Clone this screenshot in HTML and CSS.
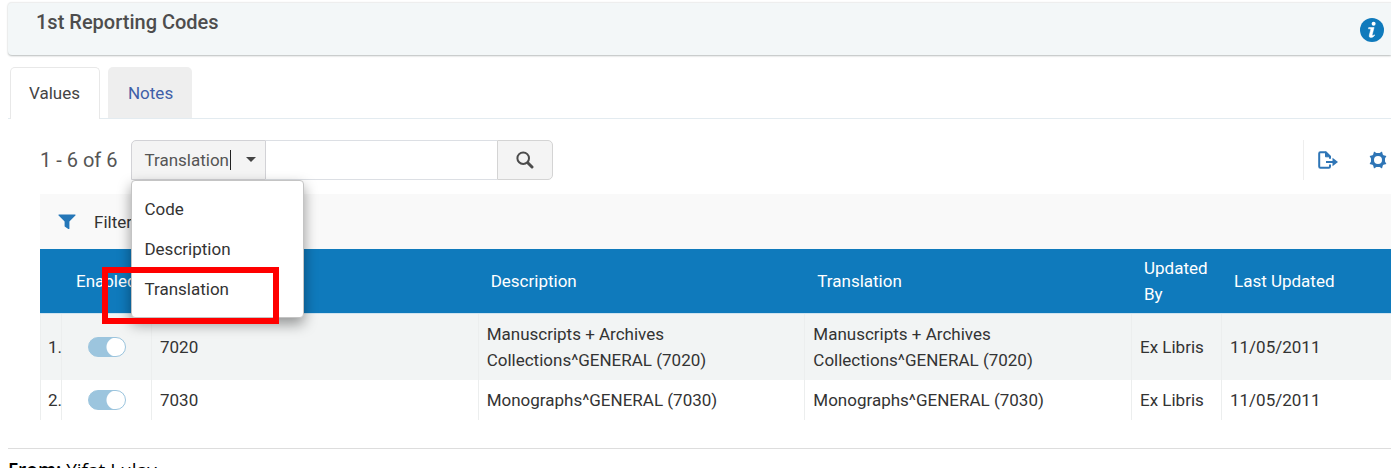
FILE: index.html
```html
<!DOCTYPE html>
<html lang="en">
<head>
<meta charset="utf-8"/>
<title>1st Reporting Codes</title>
<link rel="stylesheet" href="styles.css">
</head>

<body>
<header class="page-header">
  <h1 class="page-title">1st Reporting Codes</h1>
  <button class="icon-button info-button" aria-label="Information">
    <svg width="24" height="24" viewBox="0 0 24 24"><circle cx="12" cy="12" r="12" fill="#0f7abc"/><circle cx="13.6" cy="5.8" r="2" fill="#fff"/><path d="M8.7 9.5h5.4l-1.9 7.2q-.2.9.5.9.7 0 1.5-.9l.6.5q-1.7 2.4-3.8 2.4-2.3 0-1.7-2.5l1.4-5.3q.2-1-.6-1H8.4z" fill="#fff" stroke="#fff" stroke-width=".5"/></svg>
  </button>
</header>

<nav class="tabs">
  <a class="tab active" href="#values">Values</a>
  <a class="tab" href="#notes">Notes</a>
</nav>

<main class="content" id="values">
  <div class="toolbar">
    <span class="count">1 - 6 of 6</span>
    <form class="search">
      <div class="search-field">
        <select class="field-select" aria-label="Search field">
          <option>Code</option>
          <option>Description</option>
          <option selected>Translation</option>
        </select>
        <span class="text-cursor"></span>
        <span class="caret"></span>
        <ul class="menu">
          <li>Code</li>
          <li>Description</li>
          <li>Translation</li>
        </ul>
        <div class="highlight"></div>
      </div>
      <input class="search-input" type="text" aria-label="Search text">
      <button class="search-button" type="button" aria-label="Search">
        <svg width="18" height="18" viewBox="0 0 18 18" fill="none" stroke="#4c4c4c"><circle cx="7.2" cy="7.2" r="5.8" stroke-width="2"/><path d="M12 12l4 4" stroke-width="3" stroke-linecap="round"/></svg>
      </button>
    </form>
    <div class="tools">
      <button class="icon-button" aria-label="Export">
        <svg width="20" height="18" viewBox="0 0 20 18" fill="none" stroke="#2e75b6" stroke-width="2"><path d="M12 13.5v2.1q0 1.2-1.2 1.2H2.4q-1.2 0-1.2-1.2V2.4q0-1.2 1.2-1.2h5.4L12 5.3v2.5"/><path d="M7.5 1v4.8H12.4z" fill="#2e75b6" stroke-width="1"/><path d="M8 11h8"/><path d="M14.5 6.8l5.5 4.2-5.5 4.2z" fill="#2e75b6" stroke="none"/></svg>
      </button>
      <button class="icon-button" aria-label="Settings">
        <svg width="18" height="18" viewBox="0 0 18 18"><path fill="#2e75b6" fill-rule="evenodd" d="M5 .6L7.4 2h3.2L13 .6l.8 2.9.7.7 2.9.8L16 7.4v3.2l1.4 2.4-2.9.8-.7.7-.8 2.9-2.4-1.4H7.4L5 17.4l-.8-2.9-.7-.7L.6 13 2 10.6V7.4L.6 5l2.9-.8.7-.7zM9 5a4 4 0 1 0 0 8a4 4 0 1 0 0-8z"/></svg>
      </button>
    </div>
  </div>

  <div class="filters">
    <svg width="18" height="16" viewBox="0 0 18 16"><path d="M.8.5h16.4q.8.4.2 1.1L11.4 7.4v7q-.2 1-1.1.5L7 12.8q-.4-.3-.4-.8V7.4L.6 1.6Q0 .9.8.5z" fill="#2577b8"/></svg>
    <span>Filters</span>
  </div>

  <table class="codes">
    <colgroup>
      <col class="col-num">
      <col class="col-enabled">
      <col>
      <col>
      <col>
      <col class="col-by">
      <col class="col-date">
    </colgroup>
    <thead>
      <tr>
        <th colspan="2" class="head-enabled">Enabled</th>
        <th></th>
        <th>Description</th>
        <th>Translation</th>
        <th>Updated By</th>
        <th>Last Updated</th>
      </tr>
    </thead>
    <tbody>
      <tr>
        <td>1.</td>
        <td class="cell-toggle"><input class="toggle" type="checkbox" aria-label="Enable 7020" checked></td>
        <td>7020</td>
        <td>Manuscripts + Archives Collections^GENERAL (7020)</td>
        <td>Manuscripts + Archives Collections^GENERAL (7020)</td>
        <td>Ex Libris</td>
        <td>11/05/2011</td>
      </tr>
      <tr>
        <td>2.</td>
        <td class="cell-toggle"><input class="toggle" type="checkbox" aria-label="Enable 7030" checked></td>
        <td>7030</td>
        <td>Monographs^GENERAL (7030)</td>
        <td>Monographs^GENERAL (7030)</td>
        <td>Ex Libris</td>
        <td>11/05/2011</td>
      </tr>
    </tbody>
  </table>
</main>

<footer class="message">
  <b>From:</b> Yifat Lulav
</footer>
</body>
</html>
```

FILE: styles.css
```css
* {
  box-sizing: border-box;
}

body {
  margin: 0;
  padding: 2px 0 0 8px;
  background: #fff;
  color: #333;
  font-family: Roboto, sans-serif;
  font-size: 17px;
  line-height: 26px;
  overflow: hidden;
}

input, select, button {
  font: inherit;
  color: inherit;
}

.page-header {
  display: flex;
  justify-content: space-between;
  padding: 6px 7px 8px 28px;
  border-top: 1px solid #eee;
  background: #f3f7f8;
  border-radius: 4px 0 0 4px;
  box-shadow: 0 1px 2px #b8bcbc;
}

.page-title {
  margin: 0;
  font-size: 20px;
  font-weight: 500;
  color: #4d4d4d;
}

.icon-button {
  display: flex;
  align-items: center;
  padding: 0;
  border: none;
  background: none;
  cursor: pointer;
}

.info-button {
  padding: 9px 0 5px;
}

.tabs {
  display: flex;
  gap: 8px;
  margin-top: 12px;
  padding-left: 2px;
  border-bottom: 1px solid #e3ebf0;
}

.tab {
  padding: 13px 19px 12px 20px;
  border-radius: 5px 5px 0 0;
  background: #eee;
  color: #3f5fa8;
  text-decoration: none;
}

.tab.active {
  margin-bottom: -1px;
  padding: 12px 19px 13px 18px;
  border: 1px solid #e8e8e8;
  border-bottom: none;
  background: #fff;
  color: #444;
}

.content {
  padding-left: 32px;
}

.toolbar {
  display: flex;
  align-items: center;
  gap: 14px;
  padding: 21px 4px 13px 0;
}

.count {
  font-size: 20px;
  color: #555;
}

.search {
  display: flex;
  height: 40px;
}

.search-field {
  position: relative;
  width: 135px;
}

.field-select {
  width: 100%;
  height: 100%;
  padding: 0 12px;
  border: 1px solid #d2d2d6;
  border-radius: 5px 0 0 0;
  background: #f4f4f4;
  color: #555;
  appearance: none;
}

.text-cursor {
  position: absolute;
  top: 10px;
  right: 35px;
  width: 1px;
  height: 20px;
  background: #222;
}

.caret {
  position: absolute;
  top: 17px;
  right: 10px;
  border: 5px solid transparent;
  border-top-color: #444;
  border-bottom: none;
}

.menu {
  position: absolute;
  z-index: 1;
  top: 40px;
  left: 0;
  width: 173px;
  margin: 0;
  padding: 8px 0;
  list-style: none;
  border: 1px solid #c4c4c4;
  border-radius: 4px;
  background: #fff;
  box-shadow: 0 6px 14px rgba(0, 0, 0, 0.4);
}

.menu li {
  padding: 7px 12px;
}

.highlight {
  position: absolute;
  z-index: 2;
  top: 127px;
  left: -29px;
  width: 177px;
  height: 57px;
  border: 6px solid #f00;
}

.search-input {
  width: 231px;
  padding: 0 12px;
  border: 1px solid #dcdfe4;
  border-width: 1px 0;
}

.search-button {
  width: 56px;
  padding: 5px 0 0;
  border: 1px solid #d4d4d4;
  border-radius: 0 5px 5px 0;
  background: #f4f4f4;
}

.tools {
  display: flex;
  gap: 31px;
  height: 40px;
  margin-left: auto;
  padding-left: 14px;
  border-left: 1px solid #eee;
}

.filters {
  display: flex;
  align-items: center;
  gap: 18px;
  height: 55px;
  margin-top: 1px;
  padding-left: 18px;
  background: #f9f9f9;
}

.codes {
  width: 100%;
  table-layout: fixed;
  border-spacing: 0;
  text-align: left;
}

.col-num {
  width: 21px;
}

.col-enabled, .col-by {
  width: 90px;
}

.col-date {
  width: 170px;
}

.codes th {
  padding: 6px 13px;
  border-bottom: 1px solid #cfe3ef;
  background: #0f7abc;
  color: #fff;
  font-weight: 400;
}

.codes .head-enabled {
  padding-left: 36px;
}

.codes td {
  padding: 7px 0 7px 8px;
  border-left: 1px solid #eceeee;
}

.codes td:first-child {
  padding-left: 7px;
}

.codes tbody tr:nth-child(odd) {
  background: #f2f4f4;
}

.codes .cell-toggle {
  padding-left: 26px;
}

.toggle {
  display: block;
  width: 38px;
  height: 20px;
  margin: 0;
  border: 1px solid #9cc5de;
  border-radius: 10px;
  background: radial-gradient(circle at 27px 9px, #fff 9px, #9cc5de 10px);
  appearance: none;
}

.message {
  margin-top: 28px;
  padding-top: 8px;
  border-top: 1px solid #ddd;
  color: #000;
  font-family: "Open Sans", sans-serif;
  font-size: 19px;
}

.message b {
  font-weight: 600;
}
```
